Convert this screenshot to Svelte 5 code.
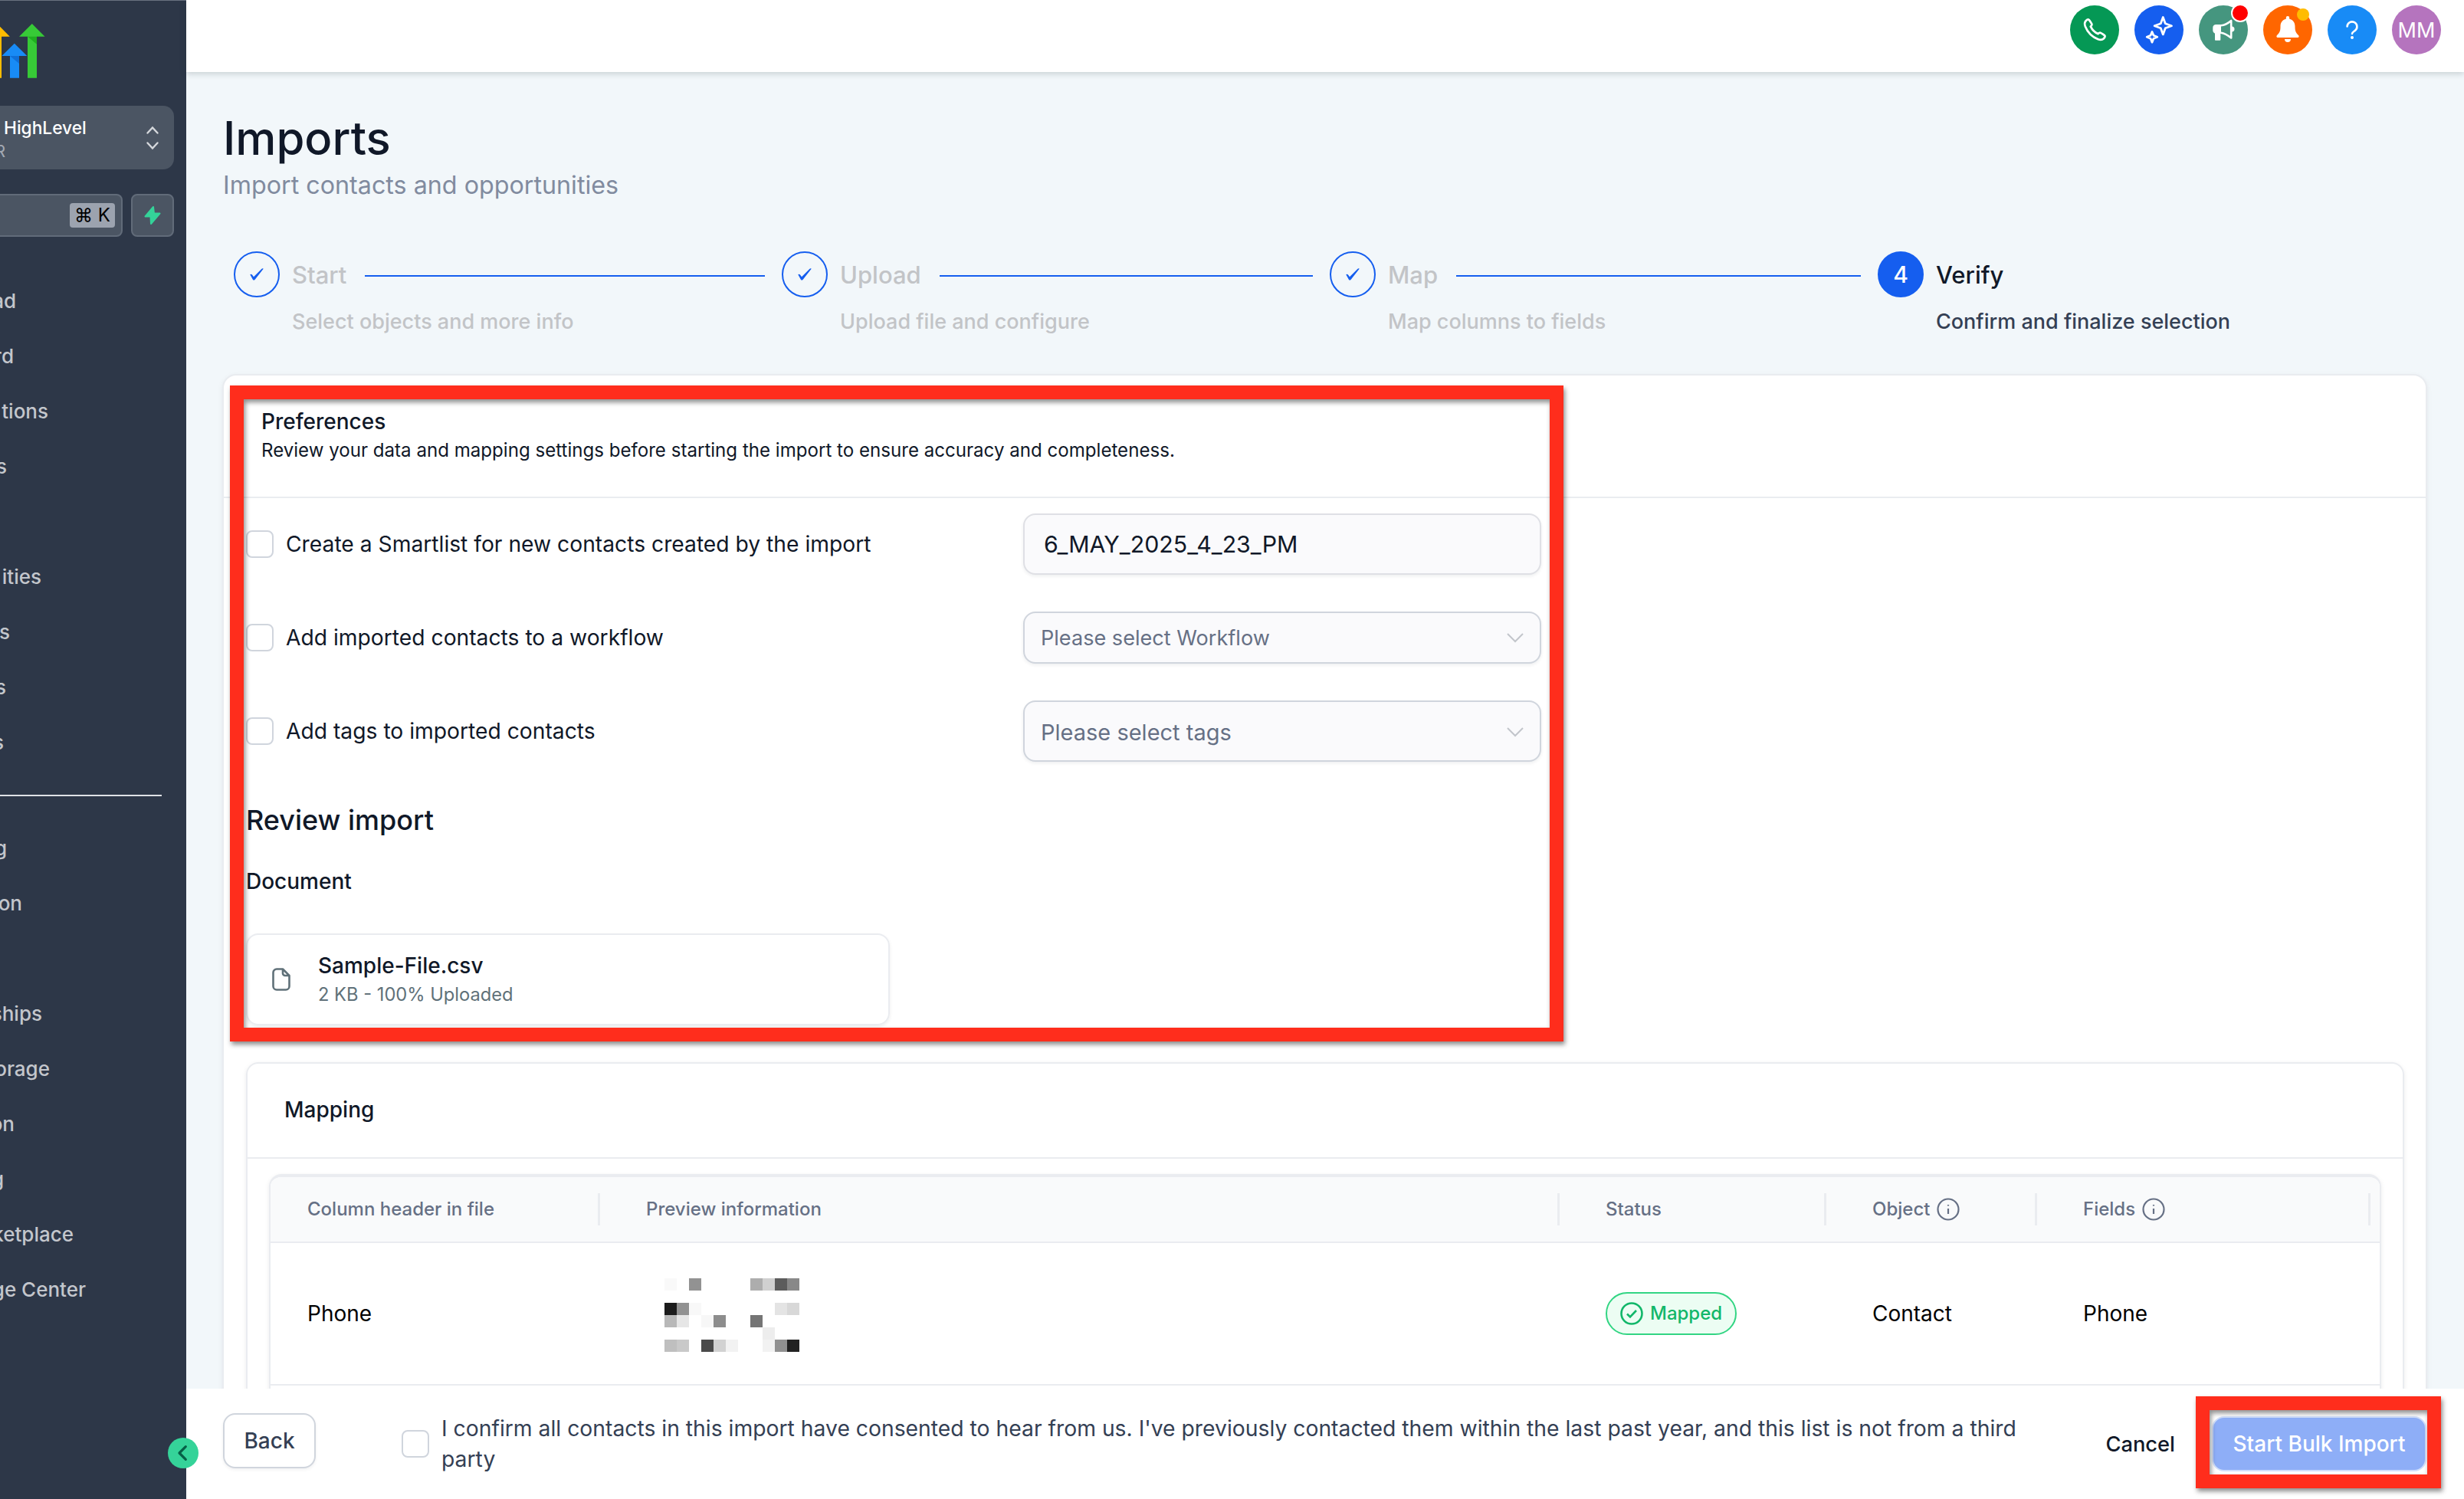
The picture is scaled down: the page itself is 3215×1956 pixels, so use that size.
<script>
  /** Bulk import wizard, final "Verify" step. */

  const steps = [
    { title: "Start", hint: "Select objects and more info", done: true },
    { title: "Upload", hint: "Upload file and configure", done: true },
    { title: "Map", hint: "Map columns to fields", done: true },
    { title: "Verify", hint: "Confirm and finalize selection", done: false },
  ];

  // The drawer is scrolled sideways, `end` is where each label stops
  const primaryNav = [
    { label: "ad", end: 21 },
    { label: "rd", end: 18 },
    { label: "tions", end: 63 },
    { label: "s", end: 9 },
    { label: "", end: 0 },
    { label: "ities", end: 54 },
    { label: "s", end: 13 },
    { label: "s", end: 8 },
    { label: "s", end: 5 },
  ];
  const secondaryNav = [
    { label: "g", end: 9 },
    { label: "on", end: 29 },
    { label: "", end: 0 },
    { label: "ships", end: 55 },
    { label: "orage", end: 65 },
    { label: "on", end: 19 },
    { label: "g", end: 5 },
    { label: "ketplace", end: 96 },
    { label: "ge Center", end: 112 },
  ];

  const options = [
    "Create a Smartlist for new contacts created by the import",
    "Add imported contacts to a workflow",
    "Add tags to imported contacts",
  ];

  const columns = [
    { label: "Column header in file", info: false },
    { label: "Preview information", info: false },
    { label: "Status", info: false },
    { label: "Object", info: true },
    { label: "Fields", info: true },
  ];

  // Redacted preview value: [column, row, grey]
  const mosaic = [
    [0, 0, 249], [2, 0, 146], [7, 0, 173], [8, 0, 208], [9, 0, 92], [10, 0, 136],
    [0, 2, 28], [1, 2, 145], [2, 2, 248], [9, 2, 228], [10, 2, 216],
    [0, 3, 184], [1, 3, 230], [3, 3, 247], [4, 3, 141], [7, 3, 117],
    [8, 4, 237],
    [0, 5, 191], [1, 5, 201], [3, 5, 74], [4, 5, 210], [5, 5, 242], [8, 5, 242], [9, 5, 145], [10, 5, 34],
  ];
</script>

{#snippet navList(items)}
  <ul class="nav">
    {#each items as item}
      <li><span class="nav-label" style="width: {item.end}px">{item.label}</span></li>
    {/each}
  </ul>
{/snippet}

{#snippet chevron()}
  <svg class="chevron" viewBox="0 0 22 12"><path d="M1 1l10 10L21 1" /></svg>
{/snippet}

<div class="app">
  <aside class="sidebar">
    <svg class="logo" viewBox="0 0 60 72">
      <path fill="#ffbc00" d="M-3.7 0L12.8 16.700H2v54h-12v-54h-10z" />
      <path fill="#188bf6" d="M18.800 25.700L35.300 42H25v28.700H13V42H2.300z" />
      <path fill="#0f6fd8" d="M13 42h12v10z" />
      <path fill="#37ca37" d="M41.800 0l16.700 16.700H48v54H36v-54H25z" />
      <path fill="#1faf1f" d="M36 16.700h12v10z" />
    </svg>

    <div class="account">
      <div class="account-text">
        <strong>HighLevel</strong>
        <span>R</span>
      </div>
      <svg viewBox="0 0 16 30"><path d="M1.500 8.500L8 1.500l6.500 7M1.500 21.500l6.500 7 6.500-7" /></svg>
    </div>

    <div class="search-row">
      <div class="search"><kbd>⌘ K</kbd></div>
      <button class="bolt" aria-label="Quick actions">
        <svg viewBox="0 0 22 24"><path d="M12 1L1.500 13.500h7L9 23 20.500 9.500h-7.500z" /></svg>
      </button>
    </div>

    {@render navList(primaryNav)}
    <hr />
    {@render navList(secondaryNav)}
  </aside>

  <div class="page">
    <header class="topbar">
      <button class="round phone" aria-label="Phone">
        <svg viewBox="0 0 24 24"><path d="M8.400 8.900a13.500 13.500 0 0 0 6.700 6.700c.6-.5 1.100-1.100 1.900-1.100.6 0 3.600 2 4.200 2.600.7.8.2 1.900-.7 2.800-1.400 1.400-3.200 1.500-5.300.7A21 21 0 0 1 3.400 8.800C2.600 6.700 2.700 4.900 4.100 3.500c.9-.9 2-1.400 2.800-.7.6.6 2.600 3.600 2.600 4.200 0 .8-.7 1.300-1.100 1.900z" /></svg>
      </button>
      <button class="round spark" aria-label="Assistant">
        <svg viewBox="0 0 36 38"><path d="M23.300 2.500l3 8.200 8.200 3-8.200 3-3 8.200-3-8.200-8.200-3 8.200-3zM9 21.500l2 4.800 4.800 2-4.800 2-2 4.800-2-4.800-4.800-2 4.800-2z" /></svg>
      </button>
      <button class="round horn" aria-label="Announcements">
        <svg viewBox="0 0 28 30"><path fill="#fff" d="M4.500 8H11v12h-.7v8a.8.8 0 0 1-.8.800H3.800a.8.8 0 0 1-.8-.8v-8.300A4 4 0 0 1 .3 16v-4a4 4 0 0 1 4.200-4z" /><path fill="none" stroke="#fff" stroke-width="2.600" stroke-linejoin="round" d="M11 9.300C16 9 20 6.500 24.200 3v22.500C20 22 16 19.300 11 18.700" /><path fill="#fff" d="M25 10.500a3.500 3.500 0 0 1 0 7z" /></svg>
        <i class="badge red"></i>
      </button>
      <button class="round bell" aria-label="Notifications">
        <svg viewBox="0 0 30 36"><path d="M15 0a2.200 2.200 0 0 1 2.200 2.300v1.500c4.800 1 7.300 5 7.300 9.700 0 5.500.8 8.200 4.500 11.500 1.200 1.200.6 3-1 3H2c-1.600 0-2.200-1.800-1-3 3.700-3.300 4.500-6 4.500-11.500 0-4.700 2.500-8.700 7.300-9.700V2.300A2.200 2.200 0 0 1 15 0zM11 30h8a4 4 0 0 1-8 0z" /></svg>
        <i class="badge amber"></i>
      </button>
      <button class="round help" aria-label="Help">
        <svg viewBox="0 0 16 24"><path d="M1.600 7.500a6.400 6.400 0 1 1 10 5.600C9.500 14.600 8 15.300 8 17" /><circle cx="8" cy="22" r="2" /></svg>
      </button>
      <div class="round avatar">MM</div>
    </header>

    <main>
      <h1>Imports</h1>
      <p class="subtitle">Import contacts and opportunities</p>

      <ol class="steps">
        {#each steps as step, i}
          <li class="step" class:done={step.done}>
            <div class="marker">
              {#if step.done}
                <svg viewBox="0 0 18 16"><path d="M.3 8.300c1.200-1.300 2.500-.6 4.700 3L15 1.200C16 0 17.600 0 17.700.8L6.500 15c-.7.8-1.900.8-2.500 0z" /></svg>
              {:else}
                {i + 1}
              {/if}
            </div>
            <div class="step-body">
              <div class="step-title">
                <span>{step.title}</span>
                {#if step.done}<div class="step-line"></div>{/if}
              </div>
              <div class="step-hint">{step.hint}</div>
            </div>
          </li>
        {/each}
      </ol>

      <section class="card">
        <div class="card-head">
          <h2>Preferences</h2>
          <p>Review your data and mapping settings before starting the import to ensure accuracy and completeness.</p>
        </div>

        <div class="card-body">
          <div class="prefs">
            <div class="checks">
              {#each options as option}
                <label class="check"><span class="box"></span>{option}</label>
              {/each}
            </div>
            <div class="fields">
              <div class="field name">6_MAY_2025_4_23_PM</div>
              <div class="field workflow">Please select Workflow {@render chevron()}</div>
              <div class="field tags">Please select tags {@render chevron()}</div>
            </div>
          </div>

          <h3>Review import</h3>
          <h4>Document</h4>

          <div class="file">
            <svg viewBox="0 0 24 30"><path d="M14 1.500H6A4.500 4.500 0 0 0 1.500 6v18A4.500 4.500 0 0 0 6 28.500h12a4.500 4.500 0 0 0 4.500-4.500V10zM14 1.500V7a3 3 0 0 0 3 3h5.500" /></svg>
            <div>
              <div class="file-name">Sample-File.csv</div>
              <div class="file-meta">2 KB - 100% Uploaded</div>
            </div>
          </div>

          <div class="mapping">
            <div class="mapping-head">Mapping</div>
            <div class="table">
              <div class="row head">
                {#each columns as col}
                  <div class="cell">
                    {col.label}
                    {#if col.info}
                      <svg class="info" viewBox="0 0 30 30"><circle cx="15" cy="15" r="13.500" /><path d="M15 14v7M15 9v1.500" /></svg>
                    {/if}
                  </div>
                {/each}
              </div>
              <div class="row">
                <div class="cell">Phone</div>
                <div class="cell">
                  <svg class="mosaic" viewBox="0 0 11 6" shape-rendering="crispEdges">
                    {#each mosaic as [x, y, g]}
                      <rect {x} {y} width="1" height="1" fill="rgb({g},{g},{g})" />
                    {/each}
                  </svg>
                </div>
                <div class="cell">
                  <span class="pill">
                    <svg viewBox="0 0 30 30"><circle cx="15" cy="15" r="13.500" /><path d="M9 15.500l4 4 8-8.500" /></svg>
                    Mapped
                  </span>
                </div>
                <div class="cell">Contact</div>
                <div class="cell">Phone</div>
              </div>
            </div>
          </div>
        </div>
      </section>
    </main>

    <footer>
      <button class="back">Back</button>
      <label class="consent">
        <span class="box"></span>
        <span>I confirm all contacts in this import have consented to hear from us. I've previously contacted them within the last past year, and this list is not from a third party</span>
      </label>
      <button class="cancel">Cancel</button>
      <button class="submit">Start Bulk Import</button>
    </footer>
  </div>

  <button class="collapse" aria-label="Collapse sidebar">
    <svg viewBox="0 0 12 20"><path d="M10.300 1.700L2 10l8.300 8.300" /></svg>
  </button>

  <div class="highlight prefs-highlight"></div>
  <div class="highlight submit-highlight"></div>
</div>

<style>
  :global(body) {
    margin: 0;
    font-family: Inter, "Liberation Sans", sans-serif;
  }
  .app {
    position: relative;
    display: flex;
    width: 3215px;
    height: 1956px;
    overflow: hidden;
    background: #f2f7fa;
    color: #101828;
    font-size: 28px;
  }
  .app :global(*) { box-sizing: border-box; }
  svg { display: block; flex: none; overflow: visible; }
  button { font: inherit; padding: 0; border: none; }
  h1, h2, h3, h4, p, ul, ol { margin: 0; padding: 0; font-weight: 500; list-style: none; }

  /* sidebar */
  .sidebar {
    width: 243px;
    flex: none;
    overflow: hidden;
    background: #2d3748;
    border-top: 1px solid #697180;
  }
  .logo { width: 60px; height: 72px; margin-top: 30px; }
  .account {
    display: flex;
    align-items: center;
    justify-content: space-between;
    width: 227px;
    height: 83px;
    margin-top: 35px;
    padding: 0 20px 0 5px;
    background: #4b5563;
    border-radius: 0 14px 14px 0;
  }
  .account-text {
    display: flex;
    flex-direction: column;
    padding-top: 4px;
    line-height: 30px;
    font-size: 22.7px;
  }
  .account strong { font-weight: 500; color: #fff; }
  .account span { margin-left: -12px; color: #a3a9b3; font-size: 22px; }
  .account svg { width: 16px; height: 30px; }
  .account path { fill: none; stroke: #d5d8dc; stroke-width: 2.4; stroke-linecap: round; }
  .search-row { display: flex; gap: 11px; margin-top: 32px; }
  .search {
    display: flex;
    align-items: center;
    justify-content: flex-end;
    width: 160px;
    height: 56px;
    padding-right: 8px;
    background: #4b5563;
    border: 2px solid #616b79;
    border-left: none;
    border-radius: 0 8px 8px 0;
  }
  kbd {
    width: 59px;
    border-radius: 4px;
    background: #9ca3af;
    color: #000;
    font-family: inherit;
    font-size: 24px;
    line-height: 32px;
    text-align: center;
    white-space: nowrap;
  }
  .bolt {
    display: grid;
    place-items: center;
    width: 56px;
    height: 56px;
    background: #4b5563;
    border: 2px solid #616b79;
    border-radius: 8px;
  }
  .bolt svg { width: 22px; height: 24px; fill: #34d399; stroke: #34d399; stroke-width: 2; stroke-linejoin: round; }
  .nav { margin-top: 48px; }
  .nav li { height: 72px; line-height: 72px; }
  .nav-label {
    display: flex;
    justify-content: flex-end;
    color: #c3c6cc;
    font-size: 26px;
    font-weight: 500;
    white-space: nowrap;
  }
  hr { width: 211px; height: 2px; margin: 32px 0 -16px; border: none; background: #dfe2e6; }

  /* top bar */
  .page { display: flex; flex-direction: column; flex: 1; min-width: 0; }
  .topbar {
    z-index: 1;
    display: flex;
    justify-content: flex-end;
    gap: 20px;
    height: 94px;
    flex: none;
    padding: 7px 30px 0 0;
    background: #fff;
    box-shadow: 0 2px 8px rgba(30, 50, 60, 0.22);
  }
  .round {
    position: relative;
    display: grid;
    place-items: center;
    width: 64px;
    height: 64px;
    border-radius: 50%;
  }
  .phone { background: #059855; }
  .phone svg { width: 34px; height: 34px; fill: none; stroke: #fff; stroke-width: 1.9; }
  .spark { background: #155eef; }
  .spark svg { width: 36px; height: 38px; fill: none; stroke: #fff; stroke-width: 2.8; stroke-linejoin: round; }
  .horn { background: #45967f; }
  .horn svg { width: 28px; height: 30px; }
  .bell { background: #ff6600; }
  .bell svg { width: 30px; height: 36px; fill: #fff; }
  .help { background: #188bf6; }
  .help svg { width: 16px; height: 24px; fill: #fff; }
  .help path { fill: none; stroke: #fff; stroke-width: 2.6; stroke-linecap: round; }
  .avatar { background: #b574be; color: #fff; font-size: 27px; }
  .badge { position: absolute; border-radius: 50%; }
  .badge.red { top: -2px; right: -2px; width: 24px; height: 24px; background: #f00; border: 2px solid #fff; }
  .badge.amber { top: 4px; right: 4px; width: 16px; height: 16px; background: #ffbc00; }

  /* main column */
  main {
    flex: 1;
    min-height: 0;
    overflow: hidden;
    padding: 50px 50px 0 49px;
  }
  h1 { margin-left: -1px; font-size: 59.8px; line-height: 72px; }
  .subtitle { margin: 2px 0 0 -1px; font-size: 32.25px; font-weight: 400; line-height: 48px; color: #818b9f; }
  .steps { display: flex; margin: 62px 0 0 13px; }
  .step { display: flex; gap: 16px; width: 715px; color: #101828; }
  .step.done { color: #c2c4c7; }
  .marker {
    display: grid;
    place-items: center;
    flex: none;
    width: 60px;
    height: 60px;
    border: 2px solid #155eef;
    border-radius: 50%;
    background: #155eef;
    color: #fff;
    font-size: 30px;
  }
  .done .marker { background: transparent; }
  .marker svg { width: 18px; height: 16px; fill: #155eef; }
  .step-body { flex: 1; }
  .step-title {
    display: flex;
    align-items: center;
    gap: 24px;
    padding-right: 22px;
    font-size: 31px;
    font-weight: 500;
    line-height: 62px;
  }
  .step-line { flex: 1; height: 2px; margin-top: 1px; background: #155eef; }
  .step-hint { margin-top: 10px; font-size: 27px; line-height: 40px; white-space: nowrap; }
  .step:not(.done) .step-hint { color: #344054; }

  .card {
    height: 1500px;
    margin-top: 50px;
    background: #fff;
    border-radius: 16px;
    box-shadow: 0 0 0 2px #e9ecf0, 0 2px 8px rgba(16, 24, 40, 0.1);
  }
  .card-head { height: 160px; padding: 42px 0 0 49px; border-bottom: 2px solid #eaecf0; }
  .card-head h2 { font-size: 28px; line-height: 36px; }
  .card-head p { font-size: 24.1px; font-weight: 400; line-height: 40px; }
  .card-body { padding: 0 28px 0 29px; }
  .prefs { display: flex; }
  .checks { display: flex; flex-direction: column; gap: 86px; width: 1014px; padding-top: 42px; }
  .check { display: flex; align-items: center; gap: 16px; height: 36px; font-size: 28.24px; }
  .box {
    flex: none;
    width: 36px;
    height: 36px;
    border: 2px solid #d0d5dd;
    border-radius: 8px;
    background: #fff;
  }
  .fields { display: flex; flex-direction: column; gap: 48px; padding-top: 20px; }
  .field {
    display: flex;
    align-items: center;
    justify-content: space-between;
    width: 676px;
    height: 80px;
    padding: 0 21px;
    background: #fafafc;
    border: 2px solid #d0d5dd;
    border-radius: 16px;
    box-shadow: 0 2px 4px rgba(16, 24, 40, 0.07);
    color: #667085;
    font-size: 29px;
  }
  .field.name { padding-left: 25px; color: #101828; border-color: #dfe0e5; font-size: 30.3px; }
  .field.workflow { height: 68px; font-size: 27.1px; }
  .field.tags { padding-top: 2px; }
  .chevron { width: 22px; height: 12px; fill: none; stroke: #c2c5cb; stroke-width: 2; }

  h3 { margin-top: 52px; font-size: 36px; line-height: 48px; }
  h4 { margin-top: 36px; font-size: 28px; line-height: 40px; }
  .file {
    display: flex;
    align-items: center;
    gap: 36px;
    width: 840px;
    height: 120px;
    margin-top: 48px;
    padding-left: 32px;
    border: 2px solid #eaecf0;
    border-radius: 16px;
    box-shadow: 0 2px 4px rgba(16, 24, 40, 0.08);
  }
  .file svg { width: 24px; height: 30px; fill: none; stroke: #607179; stroke-width: 2.6; stroke-linejoin: round; }
  .file-name { font-weight: 500; line-height: 38px; }
  .file-meta { color: #607179; font-size: 23.7px; line-height: 37px; }

  .mapping {
    height: 800px;
    margin-top: 48px;
    border: 2px solid #eaecf0;
    border-radius: 16px;
    box-shadow: 0 2px 6px rgba(16, 24, 40, 0.08);
  }
  .mapping-head {
    height: 124px;
    padding: 40px 0 0 48px;
    border-bottom: 2px solid #eaecf0;
    font-weight: 500;
    line-height: 40px;
  }
  .table {
    height: 700px;
    margin: 20px 28px 0 28px;
    border: 2px solid #eaecf0;
    border-top-width: 4px;
    border-radius: 16px;
    overflow: hidden;
    box-shadow: 0 2px 6px rgba(16, 24, 40, 0.08);
  }
  .row {
    display: grid;
    grid-template-columns: 442px 1252px 348px 275px 1fr;
    height: 186px;
    border-bottom: 2px solid #eaecf0;
    color: #000;
  }
  .cell { display: flex; align-items: center; padding-left: 48px; }
  .row.head {
    height: 86px;
    background: #f9fafb;
    color: #667085;
    font-size: 24px;
    font-weight: 500;
  }
  .head .cell { padding-bottom: 1px; }
  .head .cell::after {
    content: "";
    width: 3px;
    height: 42px;
    margin: 0 12px 0 auto;
    background: #eaecf0;
  }
  .info { width: 30px; height: 30px; margin-left: 9px; fill: none; stroke: #667085; stroke-width: 2.2; }
  .mosaic { width: 176px; height: 96px; margin: 4px 0 0 24px; }
  .pill {
    display: flex;
    align-items: center;
    gap: 9px;
    height: 56px;
    padding: 0 17px 1px;
    background: #ecfdf3;
    border: 2px solid #32d583;
    border-radius: 28px;
    color: #12b76a;
    font-size: 24px;
    font-weight: 500;
  }
  .pill svg { width: 30px; height: 30px; fill: none; stroke: #12b76a; stroke-width: 2.6; }

  /* footer */
  footer {
    display: flex;
    align-items: center;
    height: 144px;
    flex: none;
    padding: 0 49px 0 48px;
    background: #fff;
    font-weight: 500;
  }
  .back {
    width: 121px;
    height: 72px;
    margin-bottom: 8px;
    background: #fff;
    border: 2px solid #d0d5dd;
    border-radius: 16px;
    box-shadow: 0 2px 4px rgba(16, 24, 40, 0.06);
    color: #344054;
  }
  .consent {
    display: flex;
    align-items: center;
    gap: 16px;
    width: 2140px;
    margin-left: 112px;
    color: #344054;
    font-size: 28.3px;
    font-weight: 400;
    line-height: 40px;
  }
  .cancel { margin-left: auto; background: none; color: #101828; font-size: 27.3px; }
  .submit {
    width: 280px;
    height: 72px;
    margin-left: 48px;
    background: #8eaef7;
    border: 2px solid #d1dffb;
    border-radius: 16px;
    color: #fff;
  }

  /* overlays */
  .collapse {
    position: absolute;
    left: 219px;
    top: 1876px;
    display: grid;
    place-items: center;
    width: 40px;
    height: 40px;
    padding-right: 3px;
    border-radius: 50%;
    background: #35d399;
  }
  .collapse svg { width: 12px; height: 20px; fill: none; stroke: #065f46; stroke-width: 3.2; stroke-linecap: round; stroke-linejoin: round; }
  .highlight {
    position: absolute;
    border: 18px solid #ff2d1c;
    box-shadow: 2px 4px 6px rgba(0, 0, 0, 0.45), inset 2px 4px 6px rgba(0, 0, 0, 0.45);
  }
  .prefs-highlight { left: 300px; top: 503px; width: 1740px; height: 856px; }
  .submit-highlight { left: 2865px; top: 1822px; width: 320px; height: 120px; }
</style>
